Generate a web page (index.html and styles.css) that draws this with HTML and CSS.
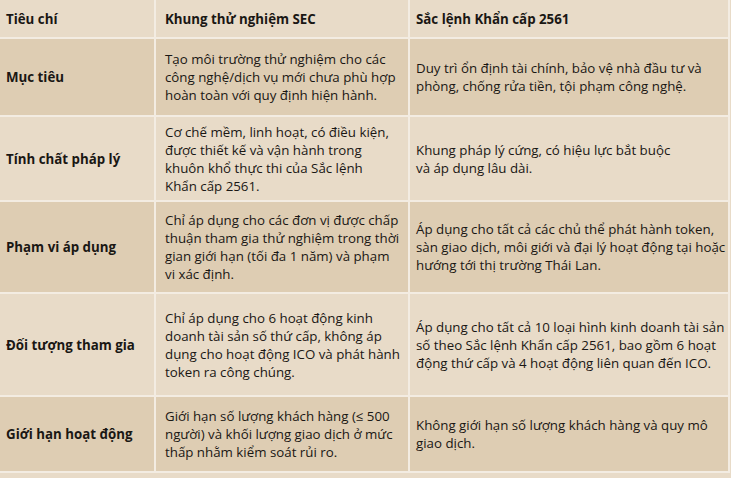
FILE: index.html
```html
<!DOCTYPE html>
<html lang="vi">
<head>
<meta charset="utf-8">
<title>So sánh</title>
<link rel="stylesheet" href="styles.css">
</head>
<body>
<table class="cmp">
  <colgroup>
    <col class="c1"><col class="c2"><col class="c3">
  </colgroup>
  <thead>
    <tr class="r-h light">
      <th>Tiêu chí</th>
      <th class="pad2">Khung thử nghiệm SEC</th>
      <th>Sắc lệnh Khẩn cấp 2561</th>
    </tr>
  </thead>
  <tbody>
    <tr class="r1 dark">
      <th>Mục tiêu</th>
      <td class="pad2">Tạo môi trường thử nghiệm cho các<br>công nghệ/dịch vụ mới chưa phù hợp<br>hoàn toàn với quy định hiện hành.</td>
      <td>Duy trì ổn định tài chính, bảo vệ nhà đầu tư và<br>phòng, chống rửa tiền, tội phạm công nghệ.</td>
    </tr>
    <tr class="r2 light">
      <th>Tính chất pháp lý</th>
      <td class="pad2">Cơ chế mềm, linh hoạt, có điều kiện,<br>được thiết kế và vận hành trong<br>khuôn khổ thực thi của Sắc lệnh<br>Khẩn cấp 2561.</td>
      <td>Khung pháp lý cứng, có hiệu lực bắt buộc<br>và áp dụng lâu dài.</td>
    </tr>
    <tr class="r3 dark">
      <th>Phạm vi áp dụng</th>
      <td class="pad2">Chỉ áp dụng cho các đơn vị được chấp<br>thuận tham gia thử nghiệm trong thời<br>gian giới hạn (tối đa 1 năm) và phạm<br>vi xác định.</td>
      <td>Áp dụng cho tất cả các chủ thể phát hành token,<br>sàn giao dịch, môi giới và đại lý hoạt động tại hoặc<br>hướng tới thị trường Thái Lan.</td>
    </tr>
    <tr class="r4 light">
      <th>Đối tượng tham gia</th>
      <td class="pad2">Chỉ áp dụng cho 6 hoạt động kinh<br>doanh tài sản số thứ cấp, không áp<br>dụng cho hoạt động ICO và phát hành<br>token ra công chúng.</td>
      <td>Áp dụng cho tất cả 10 loại hình kinh doanh tài sản<br>số theo Sắc lệnh Khẩn cấp 2561, bao gồm 6 hoạt<br>động thứ cấp và 4 hoạt động liên quan đến ICO.</td>
    </tr>
    <tr class="r5 dark">
      <th>Giới hạn hoạt động</th>
      <td class="pad2">Giới hạn số lượng khách hàng (≤ 500<br>người) và khối lượng giao dịch ở mức<br>thấp nhằm kiểm soát rủi ro.</td>
      <td>Không giới hạn số lượng khách hàng và quy mô<br>giao dịch.</td>
    </tr>
  </tbody>
</table>
</body>
</html>
```

FILE: styles.css
```css
html, body {
  margin: 0;
  padding: 0;
  background: #e8dbc8;
}
body {
  font-family: "Open Sans", "Noto Sans", sans-serif;
  font-size: 13.3px;
  color: #1a1714;
}
.cmp {
  border-collapse: collapse;
  table-layout: fixed;
  width: 729px;
}
.c1 { width: 155px; }
.c2 { width: 254px; }
.c3 { width: 320px; }
.cmp th, .cmp td {
  border: 2px solid #f3ece2;
  padding: 0 2px 0 6px;
  vertical-align: middle;
  text-align: left;
  white-space: nowrap;
  line-height: 18px;
}
.cmp thead th { border-top: none; }
.cmp th:first-child, .cmp td:first-child { border-left: none; }
.cmp th { font-weight: 700; }
.cmp td { font-weight: 400; }
.cmp .pad2 { padding-left: 9px; }
.light { background: #e8dbc8; }
.dark { background: #decdb3; }
.r-h { height: 38px; }
.r1 { height: 78px; }
.r2 { height: 85px; }
.r3 { height: 92px; }
.r4 { height: 103px; }
.r5 { height: 76px; }
```
